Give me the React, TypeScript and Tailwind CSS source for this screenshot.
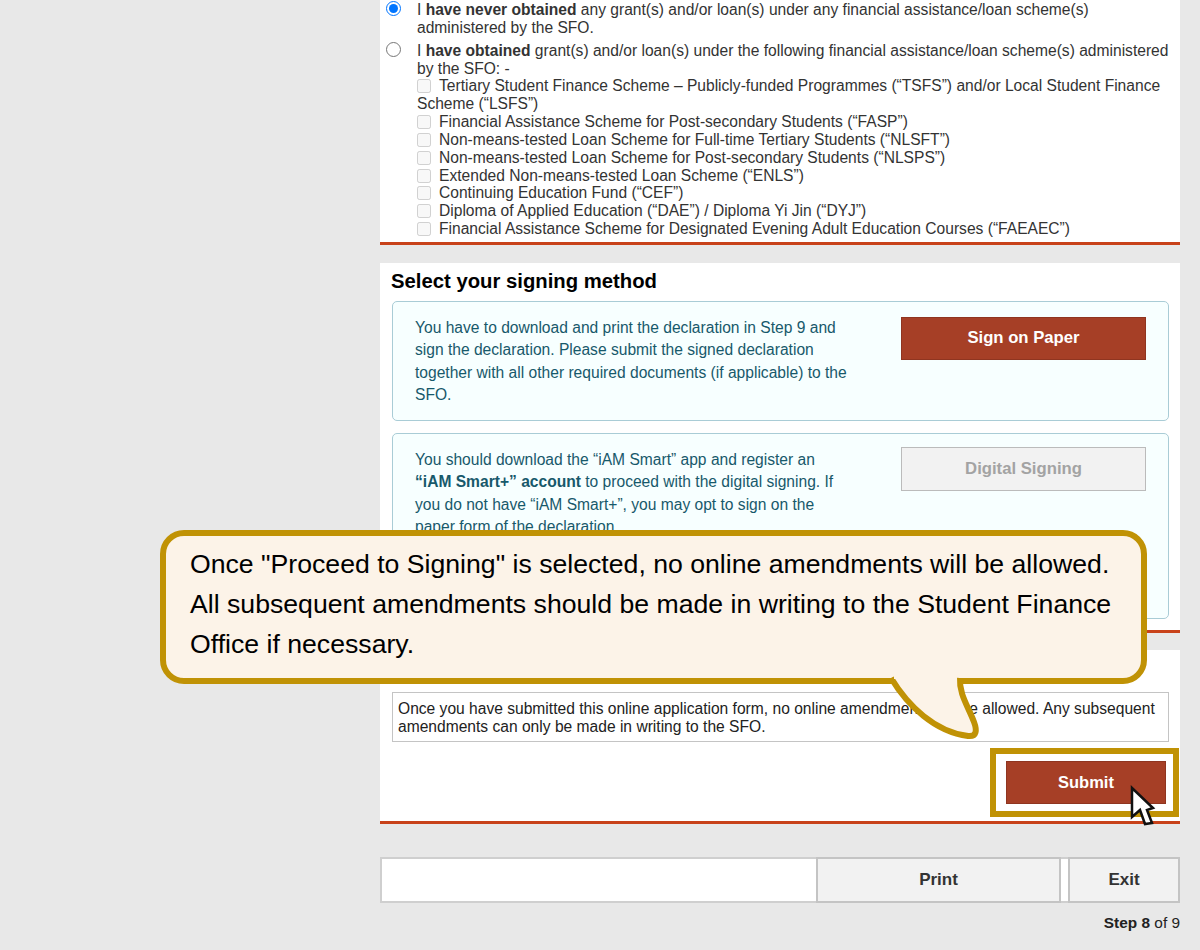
const schemes = [
  "Financial Assistance Scheme for Post-secondary Students (“FASP”)",
  "Non-means-tested Loan Scheme for Full-time Tertiary Students (“NLSFT”)",
  "Non-means-tested Loan Scheme for Post-secondary Students (“NLSPS”)",
  "Extended Non-means-tested Loan Scheme (“ENLS”)",
  "Continuing Education Fund (“CEF”)",
  "Diploma of Applied Education (“DAE”) / Diploma Yi Jin (“DYJ”)",
  "Financial Assistance Scheme for Designated Evening Adult Education Courses (“FAEAEC”)",
];

function SchemeCheck() {
  return <input type="checkbox" disabled className="w-[14px] h-[14px] m-0 mr-[8px] align-[-2px]" />;
}

export default function App() {
  return (
    <div className="relative w-[1200px] h-[950px] overflow-hidden bg-[#e8e8e8] font-['Liberation_Sans',Arial,sans-serif]">
      <main className="ml-[380px] w-[800px]">
        {/* Declaration on previous grants */}
        <section className="h-[245px] pt-[1px] bg-white border-b-[3px] border-[#c8421a] text-[15.6px] leading-[17.85px] text-[#333333]">
          <div className="flex pl-[6px] pr-[8px]">
            <input type="radio" name="obtained" defaultChecked className="w-[15px] h-[15px] m-0 shrink-0" />
            <p className="ml-[16px]">
              I <b>have never obtained</b> any grant(s) and/or loan(s) under any financial assistance/loan scheme(s) administered by the SFO.
            </p>
          </div>
          <div className="flex pl-[6px] pr-[8px] mt-[5px]">
            <input type="radio" name="obtained" className="w-[15px] h-[15px] m-0 shrink-0" />
            <div className="ml-[16px]">
              <p>
                I <b>have obtained</b> grant(s) and/or loan(s) under the following financial assistance/loan scheme(s) administered by the SFO: -
              </p>
              <p>
                <SchemeCheck />
                Tertiary Student Finance Scheme – Publicly-funded Programmes (“TSFS”) and/or Local Student Finance Scheme (“LSFS”)
              </p>
              {schemes.map((s) => (
                <p key={s} className="whitespace-nowrap">
                  <SchemeCheck />
                  {s}
                </p>
              ))}
            </div>
          </div>
        </section>

        {/* Signing method */}
        <section className="mt-[18px] h-[370px] bg-white border-b-[3px] border-[#c8421a] pl-[12px] pr-[11px] pt-[7px]">
          <h2 className="-ml-[1px] text-[20.3px] leading-[23px] font-bold text-black">Select your signing method</h2>
          <div className="mt-[8px] h-[120px] flex rounded-[5px] border border-[#a9ccd6] bg-[#f7ffff] pl-[22px] pt-[15px] pr-[22px] text-[#17596b] text-[15.6px] leading-[22.3px]">
            <p className="w-[440px]">
              You have to download and print the declaration in Step 9 and sign the declaration. Please submit the signed declaration together with all other required documents (if applicable) to the SFO.
            </p>
            <button className="ml-auto w-[245px] h-[43px] pb-[1px] bg-[#a63f26] border border-[#8f3520] text-white font-bold text-[16.7px]">
              Sign on Paper
            </button>
          </div>
          <div className="mt-[12px] h-[186px] flex rounded-[5px] border border-[#a9ccd6] bg-[#f7ffff] pl-[22px] pt-[15px] pr-[22px] text-[#17596b] text-[15.6px] leading-[22.3px]">
            <p className="w-[440px]">
              You should download the “iAM Smart” app and register an <b>“iAM Smart+” account</b> to proceed with the digital signing. If you do not have “iAM Smart+”, you may opt to sign on the paper form of the declaration.
            </p>
            <button disabled className="ml-auto -mt-[2px] w-[245px] h-[44px] bg-[#f2f2f2] border border-[#bbbbbb] text-[#a3a3a3] font-bold text-[16.7px]">
              Digital Signing
            </button>
          </div>
        </section>

        {/* Submit */}
        <section className="mt-[17px] h-[174px] bg-white border-b-[3px] border-[#c8421a] pl-[12px] pr-[11px] pt-[42px]">
          <div className="h-[50px] border border-[#c4c4c4] px-[5px] pt-[7px] text-[15.6px] leading-[17.85px] text-[#222222]">
            Once you have submitted this online application form, no online amendments will be allowed. Any subsequent amendments can only be made in writing to the SFO.
          </div>
          <div className="flex justify-end pr-[3px] pt-[19px]">
            <button className="w-[160px] h-[43px] pb-[1px] bg-[#a63f26] border border-[#8f3520] text-white font-bold text-[16.5px]">
              Submit
            </button>
          </div>
        </section>

        <div className="mt-[33px] h-[46px] flex bg-white border-2 border-[#cfcfcf] border-r-0">
          <div className="flex-1" />
          <button className="w-[245px] -my-[2px] pb-[1px] bg-[#f2f2f2] border-2 border-[#c4c4c4] text-[#333333] font-bold text-[17px]">
            Print
          </button>
          <div className="w-[7px]" />
          <button className="w-[112px] -my-[2px] pb-[1px] bg-[#f2f2f2] border-2 border-[#c4c4c4] text-[#333333] font-bold text-[17px]">
            Exit
          </button>
        </div>
        <p className="mt-[11px] text-right text-[15.4px] leading-[18px] text-[#222222]">
          <b>Step 8</b> of 9
        </p>
      </main>

      {/* Tutorial callout */}
      <div className="absolute left-[160px] top-[530px] w-[987px] h-[154px] rounded-[24px] border-[6px] border-[#c09205] bg-[#fcf3e8] pl-[24px] pt-[8px] text-[26.65px] leading-[40px] text-black whitespace-nowrap">
        <p>Once "Proceed to Signing" is selected, no online amendments will be allowed.</p>
        <p>All subsequent amendments should be made in writing to the Student Finance</p>
        <p>Office if necessary.</p>
      </div>
      <svg className="absolute left-[880px] top-[670px]" width="110" height="80" viewBox="880 670 110 80">
        <path d="M891 678 C 908 706 935 732 968 736 C 977 737 977 730 974 722 C 968 706 959 694 960 678" fill="#fcf3e8" stroke="#c09205" strokeWidth="6" />
        <rect x="894" y="670" width="63" height="9" fill="#fcf3e8" />
      </svg>

      {/* Highlight round the Submit button */}
      <div className="absolute left-[990px] top-[748px] w-[189px] h-[69px] border-[6px] border-[#c09205]" />

      {/* Mouse pointer */}
      <svg className="absolute left-[1128px] top-[785px]" width="30" height="44" viewBox="0 0 30 44">
        <path d="M4 3 L4 32 L12 25 L17 39 L24 38 L19 25 L25 23 Z" fill="white" stroke="#111111" strokeWidth="2.5" strokeLinejoin="miter" />
      </svg>
    </div>
  );
}
